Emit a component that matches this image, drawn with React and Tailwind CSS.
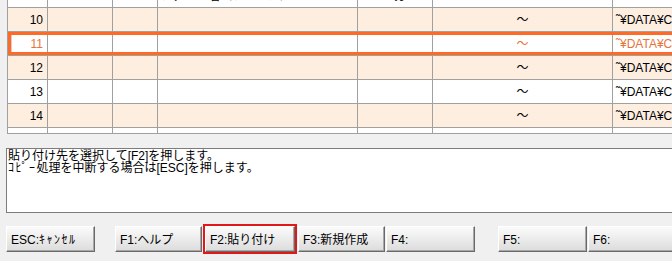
import React from "react";

const FONT = { fontFamily: '"Liberation Sans", "Noto Sans CJK JP", sans-serif' };

const rows = [
  { n: "10", bg: "bg-[#fdeee0]", sel: false },
  { n: "11", bg: "bg-white", sel: true },
  { n: "12", bg: "bg-[#fdeee0]", sel: false },
  { n: "13", bg: "bg-white", sel: false },
  { n: "14", bg: "bg-[#fdeee0]", sel: false },
];

function Row({ n, bg, sel }) {
  const tc = sel ? "text-[#e8733a]" : "text-black";
  return (
    <div className={`relative flex h-[24px] border-b border-[#a0a0a0] ${bg} ${tc} text-[12px] leading-[12px]`}>
      <div className="w-[40px] shrink-0 border-r border-[#a0a0a0] flex items-center justify-end pr-[4px] pt-[1px]">{n}</div>
      <div className="w-[65px] shrink-0 border-r border-[#a0a0a0]" />
      <div className="w-[45px] shrink-0 border-r border-[#a0a0a0]" />
      <div className="w-[200px] shrink-0 border-r border-[#a0a0a0]" />
      <div className="w-[75px] shrink-0 border-r border-[#a0a0a0]" />
      <div className="w-[180px] shrink-0 border-r border-[#a0a0a0] flex items-center justify-center">～</div>
      <div className="w-[120px] shrink-0 flex items-center pl-[3px] pt-[1px] whitespace-nowrap">˜¥DATA¥COPY</div>
      {sel && (
        <div className="absolute left-0 top-0 bottom-0 w-[700px] border-[3px] border-[#ff6a26] pointer-events-none">
          <div className="absolute left-0 top-0 bottom-0 w-[1px] bg-[#d0d0d0]" />
        </div>
      )}
    </div>
  );
}

function Btn({ children, w, ml, red }) {
  return (
    <div
      className={`shrink-0 h-[26px] ${w} ${ml} flex items-center pl-[4px] pt-[2px] text-[12px] leading-[12px] text-black whitespace-nowrap bg-gradient-to-b from-[#fbfbfb] to-[#dcdcdc] border border-t-white border-l-white border-r-[#6a6a6a] border-b-[#6a6a6a] shadow-[inset_-1px_-1px_0_#a8a8a8] ${red ? "outline-2 outline-[#e01818]" : ""}`}
    >
      {children}
    </div>
  );
}

export default function App() {
  return (
    <div className="w-[672px] h-[261px] bg-[#f0f0f0] overflow-hidden" style={FONT}>
      {/* grid */}
      <div className="ml-[7px] w-[720px] border-l border-b border-[#a0a0a0] bg-white">
        <div className="flex h-[8px] border-b border-[#a0a0a0] overflow-hidden text-[12px] leading-[12px]">
          <div className="w-[40px] shrink-0 border-r border-[#a0a0a0]" />
          <div className="w-[65px] shrink-0 border-r border-[#a0a0a0]" />
          <div className="w-[45px] shrink-0 border-r border-[#a0a0a0]" />
          <div className="w-[200px] shrink-0 border-r border-[#a0a0a0] pl-[2px] -mt-[10px] whitespace-nowrap">ファイル名（フルパス）</div>
          <div className="w-[75px] shrink-0 border-r border-[#a0a0a0] pl-[36px] -mt-[10px] whitespace-nowrap">分</div>
          <div className="w-[180px] shrink-0 border-r border-[#a0a0a0]" />
          <div className="w-[120px] shrink-0" />
        </div>
        {rows.map((r) => (
          <Row key={r.n} {...r} />
        ))}
        <div className="flex h-[5px]">
          <div className="w-[40px] shrink-0 border-r border-[#a0a0a0]" />
          <div className="w-[65px] shrink-0 border-r border-[#a0a0a0]" />
          <div className="w-[45px] shrink-0 border-r border-[#a0a0a0]" />
          <div className="w-[200px] shrink-0 border-r border-[#a0a0a0]" />
          <div className="w-[75px] shrink-0 border-r border-[#a0a0a0]" />
          <div className="w-[180px] shrink-0 border-r border-[#a0a0a0]" />
          <div className="w-[120px] shrink-0" />
        </div>
      </div>

      {/* message */}
      <div className="ml-[6px] mt-[14px] w-[700px] h-[65px] border border-[#7c7c7c] bg-white pl-[1px] pt-[1px] text-[12px] leading-[12px] text-black">
        <div className="h-[12px]">貼り付け先を選択して[F2]を押します。</div>
        <div className="h-[12px]">
          <span className="tracking-[1.5px]">ｺﾋﾟｰ</span>処理を中断する場合は[ESC]を押します。
        </div>
      </div>

      {/* buttons */}
      <div className="flex mt-[13px] pl-[6px]">
        <Btn w="w-[89px]" ml="">
          ESC:<span className="tracking-[1.5px]">ｷｬﾝｾﾙ</span>
        </Btn>
        <Btn w="w-[87px]" ml="ml-[20px]">F1:ヘルプ</Btn>
        <Btn w="w-[90px]" ml="ml-[3px]" red>F2:貼り付け</Btn>
        <Btn w="w-[87px]" ml="ml-[3px]">F3:新規作成</Btn>
        <Btn w="w-[89px]" ml="ml-[1px]">F4:</Btn>
        <Btn w="w-[89px]" ml="ml-[23px]">F5:</Btn>
        <Btn w="w-[89px]" ml="ml-[1px]">F6:</Btn>
      </div>
    </div>
  );
}
